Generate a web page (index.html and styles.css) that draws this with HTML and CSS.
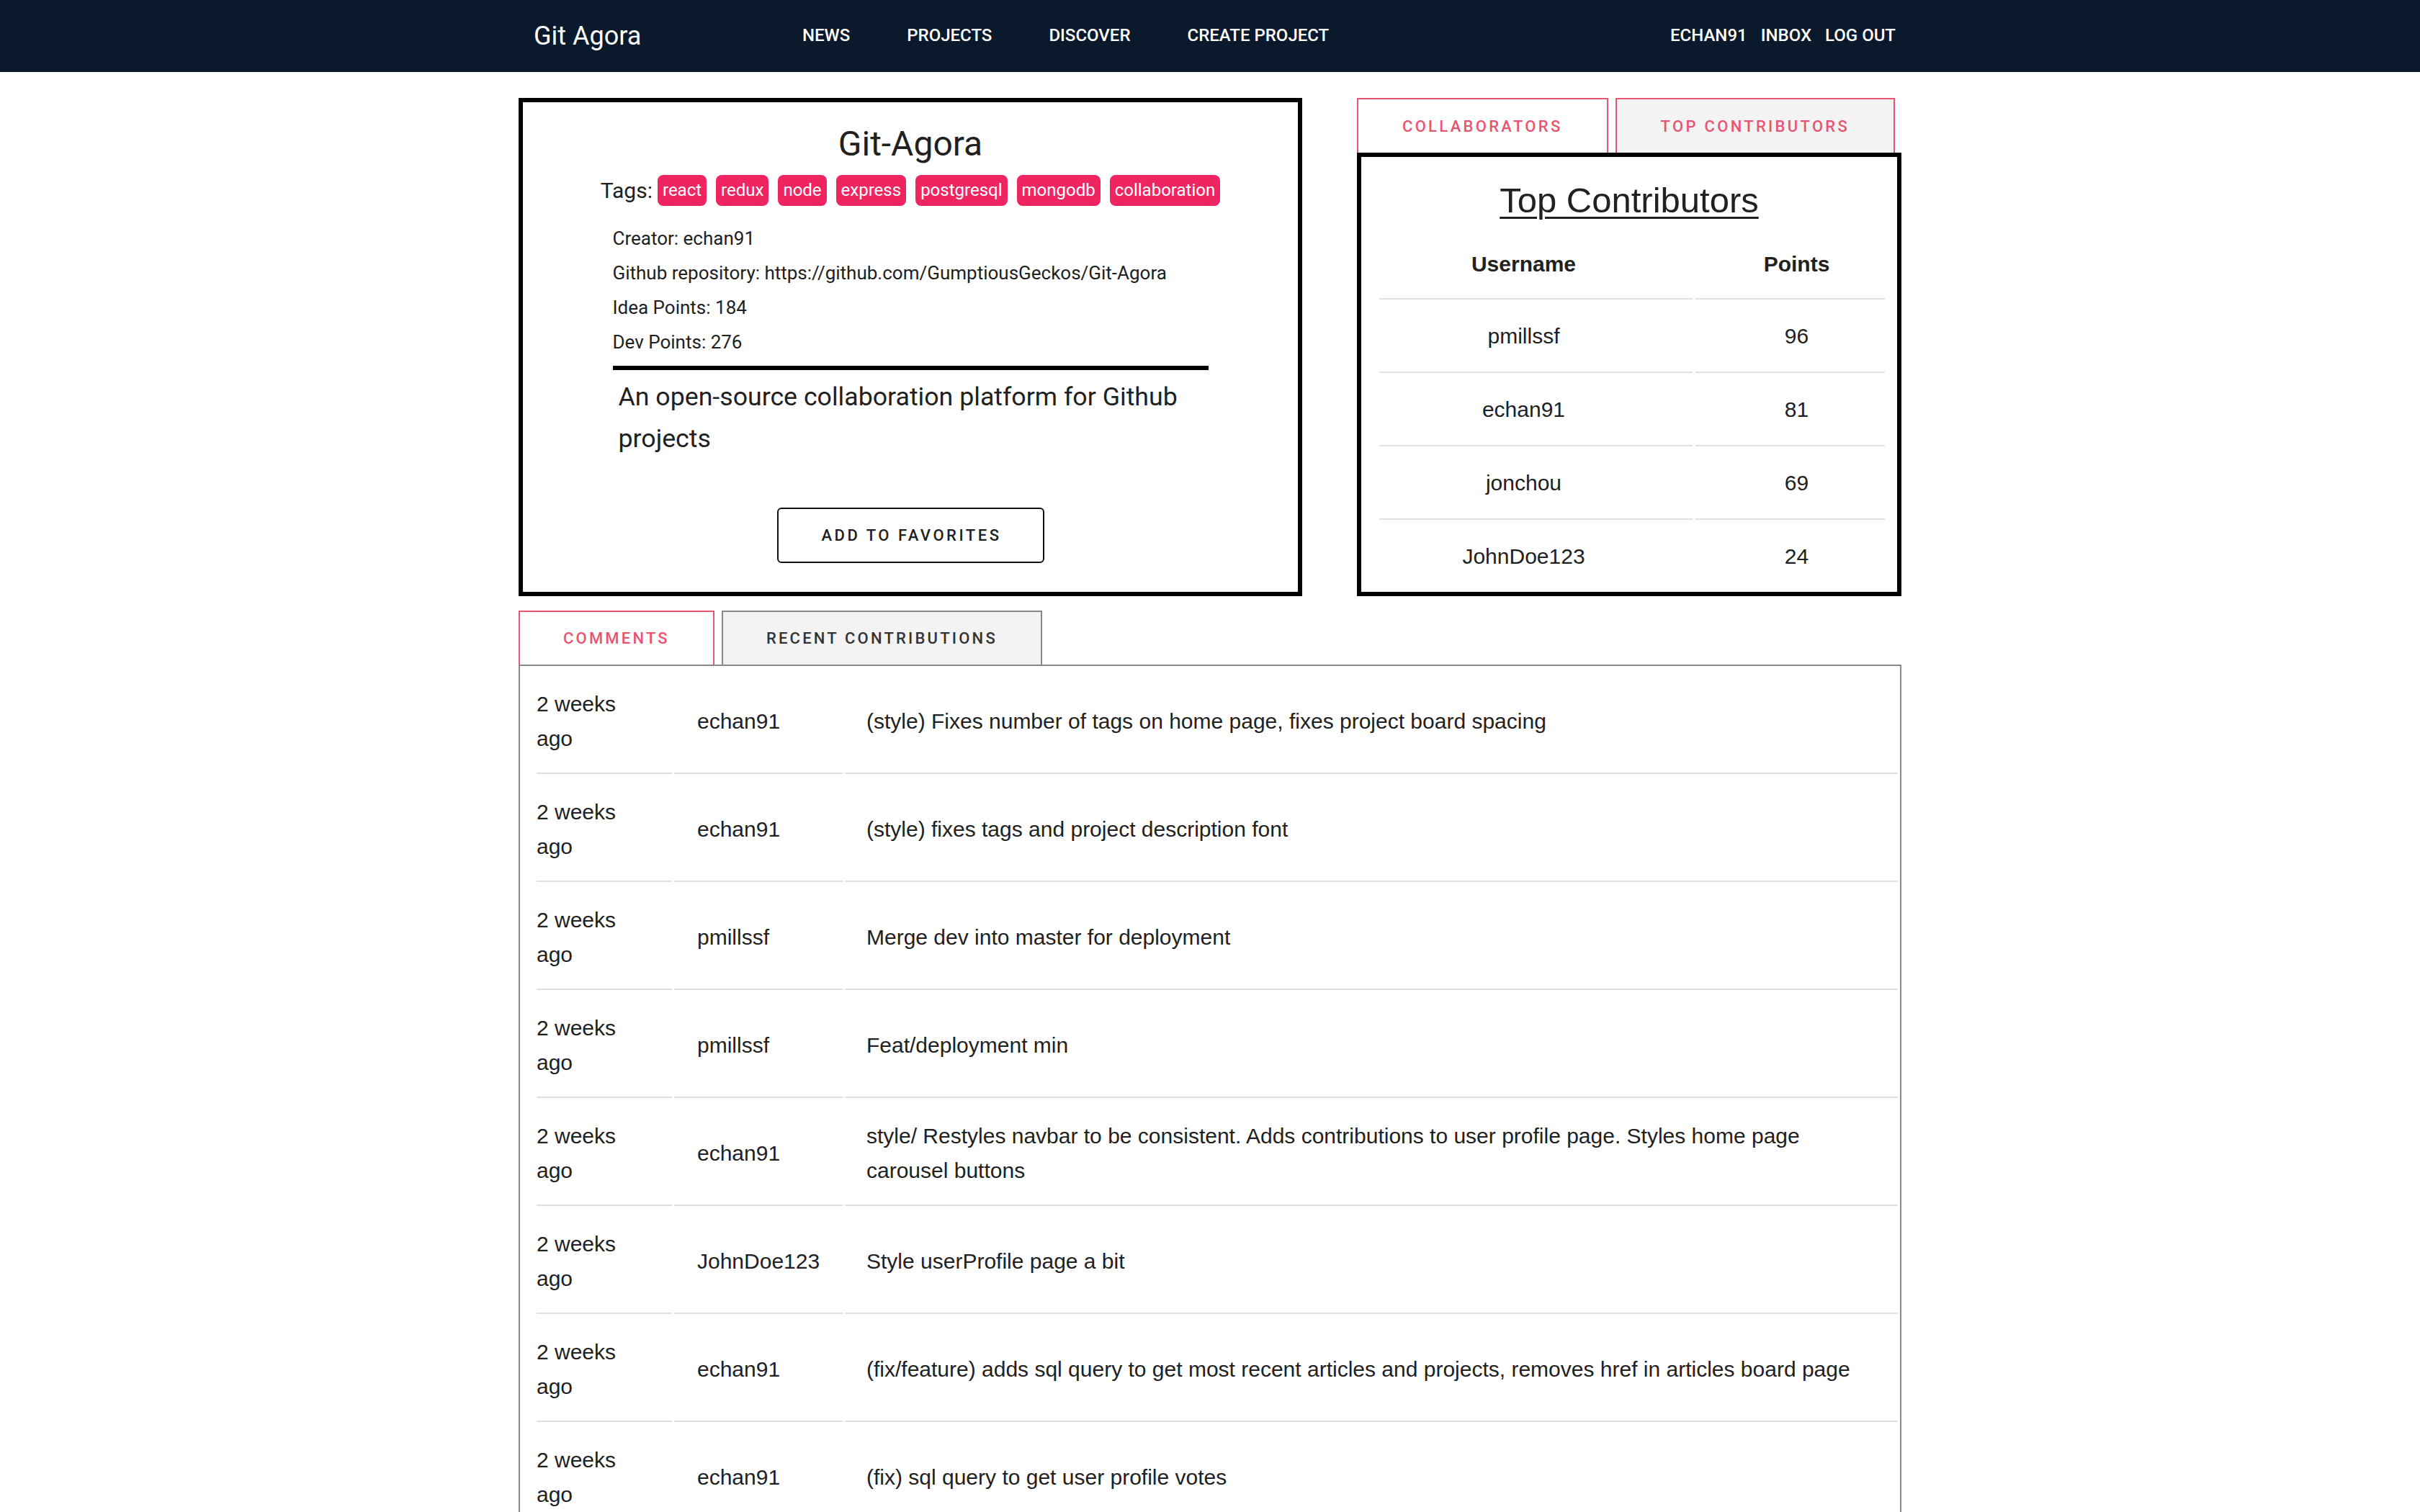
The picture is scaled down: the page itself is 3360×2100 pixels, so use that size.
FILE: index.html
```html
<!DOCTYPE html>
<html lang="en">
<head>
<meta charset="utf-8">
<title>Git Agora</title>
<link rel="stylesheet" href="styles.css">
</head>
<body>
<nav class="nav">
  <div class="nav-inner">
    <a class="brand">Git Agora</a>
    <ul class="nav-links">
      <li>NEWS</li>
      <li>PROJECTS</li>
      <li>DISCOVER</li>
      <li>CREATE PROJECT</li>
    </ul>
    <ul class="nav-right">
      <li>ECHAN91</li>
      <li>INBOX</li>
      <li>LOG OUT</li>
    </ul>
  </div>
</nav>
<main class="container">
  <section class="top-row">
    <div class="project-card">
      <h1 class="project-title">Git-Agora</h1>
      <div class="tags">
        <span class="tags-label">Tags:</span>
        <span class="chip">react</span>
        <span class="chip">redux</span>
        <span class="chip">node</span>
        <span class="chip">express</span>
        <span class="chip">postgresql</span>
        <span class="chip">mongodb</span>
        <span class="chip">collaboration</span>
      </div>
      <div class="info">
        <div class="info-line">Creator: echan91</div>
        <div class="info-line">Github repository: https://github.com/GumptiousGeckos/Git-Agora</div>
        <div class="info-line">Idea Points: 184</div>
        <div class="info-line">Dev Points: 276</div>
        <div class="divider"></div>
        <p class="desc">An open-source collaboration platform for Github projects</p>
      </div>
      <button class="fav-btn">ADD TO FAVORITES</button>
    </div>
    <div class="side">
      <div class="tabs">
        <div class="tab tab-pink">COLLABORATORS</div>
        <div class="tab tab-pink tab-grey-bg">TOP CONTRIBUTORS</div>
      </div>
      <div class="contrib-box">
        <h2 class="contrib-title">Top Contributors</h2>
        <table class="contrib-table">
          <thead>
            <tr><th class="c-user">Username</th><th class="c-pts">Points</th></tr>
          </thead>
          <tbody>
            <tr><td class="c-user">pmillssf</td><td class="c-pts">96</td></tr>
            <tr><td class="c-user">echan91</td><td class="c-pts">81</td></tr>
            <tr><td class="c-user">jonchou</td><td class="c-pts">69</td></tr>
            <tr class="last"><td class="c-user">JohnDoe123</td><td class="c-pts">24</td></tr>
          </tbody>
        </table>
      </div>
    </div>
  </section>
  <section class="activity">
    <div class="tabs activity-tabs">
      <div class="tab tab-comments">COMMENTS</div>
      <div class="tab tab-recent">RECENT CONTRIBUTIONS</div>
    </div>
    <div class="activity-box">
      <table class="activity-table">
        <tbody>
          <tr><td class="a-time">2 weeks ago</td><td class="a-user">echan91</td><td class="a-msg">(style) Fixes number of tags on home page, fixes project board spacing</td></tr>
          <tr><td class="a-time">2 weeks ago</td><td class="a-user">echan91</td><td class="a-msg">(style) fixes tags and project description font</td></tr>
          <tr><td class="a-time">2 weeks ago</td><td class="a-user">pmillssf</td><td class="a-msg">Merge dev into master for deployment</td></tr>
          <tr><td class="a-time">2 weeks ago</td><td class="a-user">pmillssf</td><td class="a-msg">Feat/deployment min</td></tr>
          <tr><td class="a-time">2 weeks ago</td><td class="a-user">echan91</td><td class="a-msg">style/ Restyles navbar to be consistent. Adds contributions to user profile page. Styles home page carousel buttons</td></tr>
          <tr><td class="a-time">2 weeks ago</td><td class="a-user">JohnDoe123</td><td class="a-msg">Style userProfile page a bit</td></tr>
          <tr><td class="a-time">2 weeks ago</td><td class="a-user">echan91</td><td class="a-msg">(fix/feature) adds sql query to get most recent articles and projects, removes href in articles board page</td></tr>
          <tr><td class="a-time">2 weeks ago</td><td class="a-user">echan91</td><td class="a-msg">(fix) sql query to get user profile votes</td></tr>
        </tbody>
      </table>
    </div>
  </section>
</main>
</body>
</html>
```
FILE: styles.css
```css
* { box-sizing: border-box; }
html, body { margin: 0; padding: 0; background: #fff; }
body { font-family: Roboto, "Liberation Sans", sans-serif; color: #212121; }

.nav { background: #0a192b; height: 100px; }
.nav-inner { width: 1920px; margin: 0 auto; height: 100px; display: flex; align-items: center; }
.brand { width: 394px; padding-left: 21px; font-size: 36px; color: #fff; line-height: 1; }
.nav-links, .nav-right { list-style: none; margin: 0; padding: 0; display: flex; color: #fff; font-size: 24px; font-weight: 500; line-height: 1; margin-top: -3px; }
.nav-links { gap: 79px; }
.nav-right { margin-left: auto; gap: 19px; padding-right: 8px; }

.container { width: 1920px; margin: 0 auto; }
.top-row { display: flex; gap: 76px; margin-top: 36px; height: 692px; }

.project-card { width: 1088px; height: 692px; border: 6px solid #000; display: flex; flex-direction: column; align-items: center; }
.project-title { margin: 29px 0 0; font-size: 48px; line-height: 58px; font-weight: 400; color: #212121; }
.tags { margin-top: 14px; display: flex; align-items: center; gap: 13px; }
.tags-label { font-size: 30px; line-height: 43px; margin-right: -6px; }
.chip { display: inline-block; height: 43px; line-height: 43px; padding: 0 7px; border-radius: 8px; background: #ef2562; color: #fff; font-size: 24px; }
.info { width: 827px; margin-top: 21px; }
.info-line { font-size: 26px; line-height: 48px; }
.divider { height: 6px; background: #000; margin-top: 9px; }
.desc { margin: 9px 0 0; padding-left: 8px; font-size: 35.7px; line-height: 57.6px; }
.fav-btn { margin-top: 67px; width: 371px; height: 77px; border: 2px solid #111; border-radius: 6px; background: #fff; font-family: Roboto, sans-serif; font-size: 22px; font-weight: 500; letter-spacing: 3.5px; color: #212121; padding: 0 0 0 3px; }

.side { width: 756px; height: 692px; display: flex; flex-direction: column; }
.tabs { display: flex; gap: 10px; }
.tab { height: 76px; padding: 0 61px; display: flex; align-items: center; font-size: 22px; font-weight: 500; letter-spacing: 3.3px; border: 2px solid transparent; border-bottom: none; }
.tab-pink { border-color: #e85570; color: #e85570; background: #fff; }
.tab-grey-bg { background: #f3f3f3; }
.contrib-box { flex: 1; min-height: 0; border: 6px solid #000; overflow: hidden; }
.contrib-title { margin: 32px 0 14px; text-align: center; font-family: "Liberation Sans", Arial, sans-serif; font-weight: 400; font-size: 49px; line-height: 56px; text-decoration: underline; text-decoration-thickness: 3px; text-underline-offset: 6px; color: #212121; }
.contrib-table { margin-left: 21px; width: 710px; border-collapse: separate; border-spacing: 4px 0; font-family: "Liberation Sans", Arial, sans-serif; font-size: 30px; color: #212121; }
.contrib-table th, .contrib-table td { padding: 0; text-align: center; border-bottom: 2px solid #e0e0e0; }
.contrib-table th { height: 96px; font-weight: 700; }
.contrib-table td { height: 102px; padding-top: 2px; }
.contrib-table tr.last td { border-bottom: none; height: 100px; }
.contrib-table .c-user { width: 435px; padding-right: 34px; }
.contrib-table .c-pts { padding-left: 18px; }

.activity { margin-top: 20px; }
.activity-tabs .tab { height: 75px; letter-spacing: 3.2px; padding: 0 60px; }
.tab-comments { border-color: #e85570; color: #e85570; background: #fff; }
.tab-recent { border-color: #888; color: #333; background: #f3f3f3; }
.activity-box { border: 2px solid #888; border-bottom: none; padding: 0 0 0 20px; }
.activity-table { width: 100%; border-collapse: separate; border-spacing: 3px 0; font-family: "Liberation Sans", Arial, sans-serif; font-size: 30px; line-height: 48px; color: #212121; }
.activity-table td { height: 150px; border-bottom: 2px solid #e0e0e0; vertical-align: middle; padding-top: 6px; }
.a-time { width: 188px; padding-right: 48px; padding-left: 0; }
.a-user { width: 234px; padding-left: 32px; }
.a-msg { padding-left: 30px; padding-right: 36px; }
```
